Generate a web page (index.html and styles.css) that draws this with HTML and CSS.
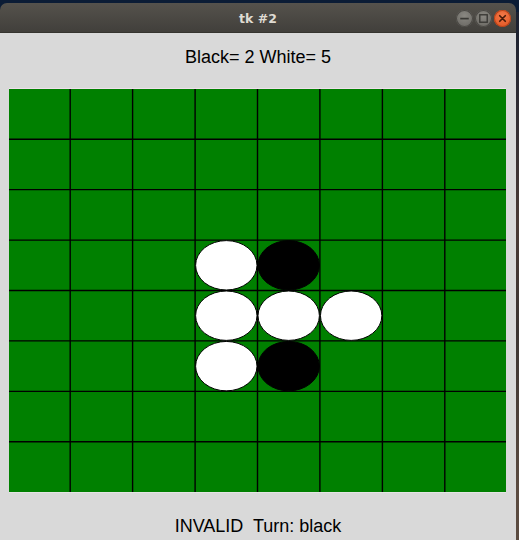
FILE: index.html
```html
<!DOCTYPE html>
<html>
<head>
<meta charset="utf-8">
<link rel="stylesheet" href="styles.css">
</head>
<body>
<div class="desktop">
  <div class="window">
    <div class="titlebar">
      <div class="tb-side"></div>
      <div class="tb-title">tk #2</div>
      <div class="tb-side tb-buttons">
        <span class="wbtn wbtn-min"><svg width="17" height="17" viewBox="0 0 16 16"><rect x="4" y="7.3" width="8" height="1.6" fill="#3a3935"/></svg></span>
        <span class="wbtn wbtn-max"><svg width="17" height="17" viewBox="0 0 16 16"><rect x="4.5" y="4.5" width="7" height="7" fill="none" stroke="#3a3935" stroke-width="1.3"/></svg></span>
        <span class="wbtn wbtn-close"><svg width="17" height="17" viewBox="0 0 16 16"><path d="M5.4 5.4 L10.6 10.6 M10.6 5.4 L5.4 10.6" stroke="#4a1a08" stroke-width="1.6" stroke-linecap="round"/></svg></span>
      </div>
    </div>
    <div class="content">
      <div class="score">Black= 2 White= 5</div>
      <div class="board">
        <svg width="497" height="403" viewBox="0 0 497 403">
          <rect x="0" y="0" width="497" height="403" fill="#008000"/>
          <g stroke="#000" stroke-width="1.4">
            <line x1="61.2" y1="0" x2="61.2" y2="403"/>
            <line x1="123.6" y1="0" x2="123.6" y2="403"/>
            <line x1="186.1" y1="0" x2="186.1" y2="403"/>
            <line x1="248.5" y1="0" x2="248.5" y2="403"/>
            <line x1="310.9" y1="0" x2="310.9" y2="403"/>
            <line x1="373.4" y1="0" x2="373.4" y2="403"/>
            <line x1="435.8" y1="0" x2="435.8" y2="403"/>
            <line x1="0" y1="50.2" x2="497" y2="50.2"/>
            <line x1="0" y1="100.6" x2="497" y2="100.6"/>
            <line x1="0" y1="151.1" x2="497" y2="151.1"/>
            <line x1="0" y1="201.5" x2="497" y2="201.5"/>
            <line x1="0" y1="251.9" x2="497" y2="251.9"/>
            <line x1="0" y1="302.4" x2="497" y2="302.4"/>
            <line x1="0" y1="352.8" x2="497" y2="352.8"/>
          </g>
          <g stroke="#000" stroke-width="1">
            <ellipse cx="217.3" cy="176.3" rx="30.7" ry="24.7" fill="#fff"/>
            <ellipse cx="279.7" cy="176.3" rx="30.7" ry="24.7" fill="#000"/>
            <ellipse cx="217.3" cy="226.7" rx="30.7" ry="24.7" fill="#fff"/>
            <ellipse cx="279.7" cy="226.7" rx="30.7" ry="24.7" fill="#fff"/>
            <ellipse cx="342.15" cy="226.7" rx="30.7" ry="24.7" fill="#fff"/>
            <ellipse cx="217.3" cy="277.15" rx="30.7" ry="24.7" fill="#fff"/>
            <ellipse cx="279.7" cy="277.15" rx="30.7" ry="24.7" fill="#000"/>
          </g>
        </svg>
      </div>
      <div class="status">INVALID  Turn: black</div>
    </div>
  </div>
  <div class="strip"></div>
</div>
</body>
</html>
```

FILE: styles.css
```css
html, body {
  margin: 0;
  padding: 0;
}
body {
  width: 519px;
  height: 540px;
  overflow: hidden;
  background: #0b1c35;
}
.desktop {
  display: flex;
  width: 519px;
  height: 540px;
}
.window {
  width: 516px;
  display: flex;
  flex-direction: column;
  padding-top: 3px;
}
.strip {
  flex: 1;
  margin-top: 12px;
  background: linear-gradient(#1a2030, #4a3a35 40%, #3b3431 60%, #5a4a40 90%);
}
.titlebar {
  height: 29px;
  display: grid;
  grid-template-columns: 1fr auto 1fr;
  align-items: center;
  background: linear-gradient(#55524c, #413f3b);
  border-radius: 7px 7px 0 0;
  border-bottom: 1px solid #35342f;
}
.tb-title {
  font-family: "DejaVu Sans", sans-serif;
  font-weight: bold;
  font-size: 12.5px;
  color: #dfdbd2;
  padding-top: 1px;
}
.tb-buttons {
  display: flex;
  justify-content: flex-end;
  gap: 2px;
  padding-right: 5px;
  padding-top: 2px;
}
.wbtn {
  width: 17px;
  height: 17px;
  border-radius: 50%;
  display: block;
}
.wbtn svg {
  display: block;
}
.wbtn-min, .wbtn-max {
  background: radial-gradient(circle at 50% 35%, #8a8882, #65635e);
  box-shadow: inset 0 0 0 1px #4a4844;
}
.wbtn-close {
  background: radial-gradient(circle at 50% 35%, #f37a4a, #e0501c);
  box-shadow: inset 0 0 0 1px #b8431a;
}
.content {
  flex: 1;
  background: #d9d9d9;
  display: flex;
  flex-direction: column;
  align-items: center;
  font-family: "Liberation Sans", Arial, sans-serif;
  font-size: 18px;
  color: #000;
}
.score {
  line-height: 20px;
  margin-top: 14px;
}
.board {
  align-self: flex-start;
  margin-left: 9px;
  margin-top: 21px;
  border-top: 1px solid #f0e0ec;
  border-bottom: 1px solid #e4e4e4;
  width: 497px;
  height: 403px;
}
.board svg {
  display: block;
}
.status {
  white-space: pre;
  line-height: 20px;
  margin-top: 23px;
}
```
